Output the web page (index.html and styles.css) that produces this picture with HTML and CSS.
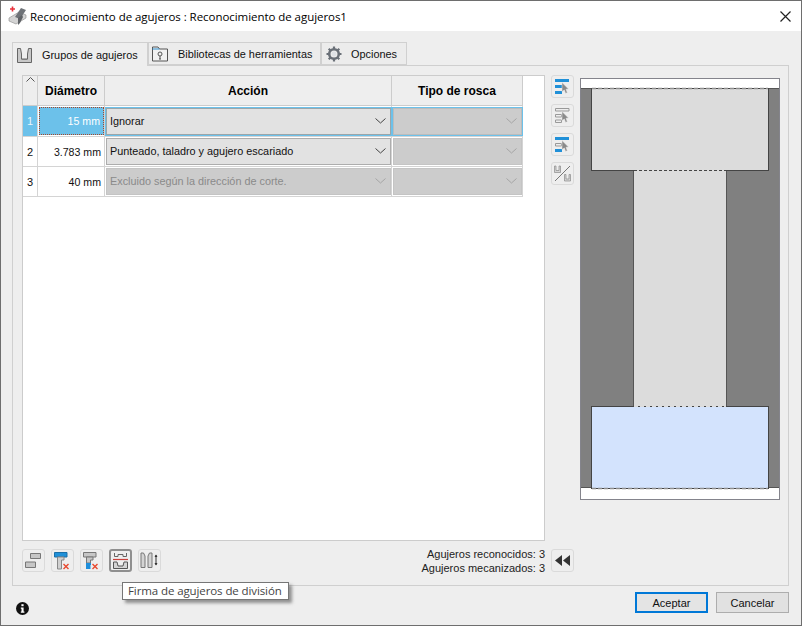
FILE: index.html
```html
<!DOCTYPE html>
<html lang="es">
<head>
<meta charset="utf-8">
<title>Reconocimiento de agujeros</title>
<link rel="stylesheet" href="styles.css">
</head>
<body>
<div class="window">
  <header class="titlebar">
    <svg class="title-icon" width="20" height="20" viewBox="0 0 20 20">
      <path d="M1 12 L11 6 L18 9 L18 12 L8 18 L1 15 Z" fill="#d4d4d4" stroke="#8a8a8a" stroke-width=".6"/>
      <path d="M7 11 L13 2 L18 4 L12 13 Z" fill="#6f7378"/>
      <path d="M10 12 L14 9 L15 11 L12 17 L10 19 Z" fill="#5f6266"/>
      <path d="M2 3 H7 M4.5 .5 V5.5" stroke="#e8303a" stroke-width="1.6"/>
    </svg>
    <span class="title-text">Reconocimiento de agujeros : Reconocimiento de agujeros1</span>
    <svg class="close-icon" width="11" height="11" viewBox="0 0 11 11"><path d="M.5 .5 L10.5 10.5 M10.5 .5 L.5 10.5" stroke="#222" stroke-width="1.2"/></svg>
  </header>

  <main class="content">
    <nav class="tabs">
      <div class="tab tab-active tab-1">
        <svg width="15" height="15" viewBox="0 0 15 15"><path d="M.5 .5 H3.5 L4.5 6 V11 H10.5 V6 L11.5 .5 H14.5 V14.5 H.5 Z" fill="#c8c8c8" stroke="#666"/><path d="M4.5 6 V11 H10.5 V6" fill="#eee" stroke="#666"/></svg>
        <span>Grupos de agujeros</span>
      </div>
      <div class="tab tab-2">
        <svg width="16" height="16" viewBox="0 0 16 16"><path d="M.5 15 V1 H6 L7.5 3 H15.5 V15 Z" fill="#f2f2f2" stroke="#555"/><path d="M.5 3 H7.5" stroke="#2b8ccc"/><circle cx="8" cy="8" r="2" fill="none" stroke="#555"/><path d="M8 10 V13 M7 13 H9" stroke="#555"/></svg>
        <span>Bibliotecas de herramientas</span>
      </div>
      <div class="tab tab-3">
        <svg width="16" height="16" viewBox="0 0 16 16"><circle cx="8" cy="8" r="4.8" fill="none" stroke="#6a7078" stroke-width="2.6"/><path d="M8 .5 V3 M8 13 V15.5 M.5 8 H3 M13 8 H15.5 M2.7 2.7 L4.5 4.5 M11.5 11.5 L13.3 13.3 M13.3 2.7 L11.5 4.5 M4.5 11.5 L2.7 13.3" stroke="#6a7078" stroke-width="2.2"/><circle cx="8" cy="8" r="2.4" fill="#dfe2e6"/></svg>
        <span>Opciones</span>
      </div>
    </nav>

    <section class="panel">
      <div class="panel-main">
        <div class="table-box">
          <table class="grid">
            <colgroup><col class="c0"><col class="c1"><col class="c2"><col class="c3"></colgroup>
            <thead>
              <tr>
                <th class="sort"><svg width="9" height="5" viewBox="0 0 9 5"><path d="M.5 4.5 L4.5 .5 L8.5 4.5" fill="none" stroke="#555"/></svg></th>
                <th>Diámetro</th><th>Acción</th><th>Tipo de rosca</th>
              </tr>
            </thead>
            <tbody>
              <tr class="row-selected">
                <td class="num">1</td>
                <td class="dia"><div class="dia-focus">15 mm</div></td>
                <td class="combo-cell"><div class="combo"><span>Ignorar</span><svg class="chev" width="11" height="6" viewBox="0 0 11 6"><path d="M.5 .5 L5.5 5 L10.5 .5" fill="none" stroke="#444"/></svg></div></td>
                <td class="combo-cell"><div class="combo combo-off"><span></span><svg class="chev" width="11" height="6" viewBox="0 0 11 6"><path d="M.5 .5 L5.5 5 L10.5 .5" fill="none" stroke="#a5a5a5"/></svg></div></td>
              </tr>
              <tr>
                <td class="num">2</td>
                <td class="dia">3.783 mm</td>
                <td class="combo-cell"><div class="combo"><span>Punteado, taladro y agujero escariado</span><svg class="chev" width="11" height="6" viewBox="0 0 11 6"><path d="M.5 .5 L5.5 5 L10.5 .5" fill="none" stroke="#444"/></svg></div></td>
                <td class="combo-cell"><div class="combo combo-off"><span></span><svg class="chev" width="11" height="6" viewBox="0 0 11 6"><path d="M.5 .5 L5.5 5 L10.5 .5" fill="none" stroke="#a5a5a5"/></svg></div></td>
              </tr>
              <tr>
                <td class="num">3</td>
                <td class="dia">40 mm</td>
                <td class="combo-cell"><div class="combo combo-off"><span>Excluido según la dirección de corte.</span><svg class="chev" width="11" height="6" viewBox="0 0 11 6"><path d="M.5 .5 L5.5 5 L10.5 .5" fill="none" stroke="#a5a5a5"/></svg></div></td>
                <td class="combo-cell"><div class="combo combo-off"><span></span><svg class="chev" width="11" height="6" viewBox="0 0 11 6"><path d="M.5 .5 L5.5 5 L10.5 .5" fill="none" stroke="#a5a5a5"/></svg></div></td>
              </tr>
            </tbody>
          </table>
        </div>

        <div class="side-tools">
          <button class="tool"><svg width="15" height="15" viewBox="0 0 15 15"><path d="M0 0 H14 V3 H0 Z M0 6 H7 V9 H0 Z M0 12 H7 V15 H0 Z" fill="#2090d8"/><path d="M7 3.5 L13.5 10 L11 10.3 L12.3 13.7 L10.5 14.3 L9.4 11 L7 12.6 Z" fill="#8a8a8a" stroke="#e8e8e8" stroke-width=".5"/></svg></button>
          <button class="tool"><svg width="15" height="15" viewBox="0 0 15 15"><path d="M.5 .5 H14 V3 H.5 Z M.5 6.5 H6.5 V9 H.5 Z M.5 12 H6.5 V14.5 H.5 Z" fill="#eee" stroke="#999"/><path d="M7 3.5 L13.5 10 L11 10.3 L12.3 13.7 L10.5 14.3 L9.4 11 L7 12.6 Z" fill="#8a8a8a" stroke="#e8e8e8" stroke-width=".5"/></svg></button>
          <button class="tool"><svg width="15" height="15" viewBox="0 0 15 15"><path d="M0 0 H14 V3 H0 Z M0 12 H7 V15 H0 Z" fill="#2090d8"/><path d="M.5 6.5 H6.5 V9 H.5 Z" fill="#eee" stroke="#999"/><path d="M7 3.5 L13.5 10 L11 10.3 L12.3 13.7 L10.5 14.3 L9.4 11 L7 12.6 Z" fill="#8a8a8a" stroke="#e8e8e8" stroke-width=".5"/></svg></button>
          <button class="tool"><svg width="19" height="17" viewBox="0 0 19 17"><path d="M1.5 1 V7.5 H7.5 V1 H6 V5.5 H3 V1 Z M11.5 9.5 V16 H17.5 V9.5 H16 V14 H13 V9.5 Z" fill="#d4d4d4" stroke="#8a8a8a" stroke-width=".7"/><path d="M2 16 L17 1" stroke="#777"/></svg></button>
        </div>

        <svg class="preview" width="200" height="422" viewBox="0 0 200 422">
          <rect x=".5" y=".5" width="199" height="421" fill="#808080" stroke="#84848c"/>
          <rect x="1" y="1" width="198" height="9" fill="#fff"/>
          <rect x="1" y="410" width="198" height="11" fill="#fff"/>
          <rect x="53.5" y="92.5" width="93" height="236" fill="#dcdcdc" stroke="#555"/>
          <rect x="11.5" y="10.5" width="177" height="82" fill="#dcdcdc" stroke="#444"/>
          <rect x="11.5" y="328.5" width="177" height="82" fill="#d3e3fd" stroke="#444"/>
          <path d="M1 10.5 H11 M189 10.5 H199 M1 409.5 H11 M189 409.5 H199" stroke="#555" fill="none"/>
          <path d="M12 10.5 H188 M12 410.5 H188" stroke="#8e8e8e" stroke-width="1.6" stroke-dasharray="4 2" fill="none"/>
          <path d="M54 92.5 H146" stroke="#dcdcdc" fill="none"/>
          <path d="M54 92.5 H146" stroke="#444" stroke-dasharray="3 2" fill="none"/>
          <path d="M54 328.5 H146" stroke="#dcdcdc" stroke-dasharray="4 2" fill="none"/>
        </svg>
      </div>

      <div class="panel-bottom">
        <div class="tool-row">
          <button class="tool"><svg width="17" height="15" viewBox="0 0 17 15"><path d="M5.5 .5 H15.5 V5.5 H5.5 Z M.5 9 H10.5 V14.5 H.5 Z" fill="#c6c6c6" stroke="#777"/></svg></button>
          <button class="tool"><svg width="17" height="18" viewBox="0 0 17 18"><path d="M.5 .5 H13 V5 H.5 Z" fill="#2090d8" stroke="#1a6fa8"/><path d="M3.5 5 H10 V8 H7.5 V17 H3.5 Z" fill="#d0d0d0" stroke="#888"/><path d="M9.5 12 L14.5 17 M14.5 12 L9.5 17" stroke="#e8492f" stroke-width="1.4"/></svg></button>
          <button class="tool"><svg width="17" height="18" viewBox="0 0 17 18"><path d="M.5 .5 H13 V5 H.5 Z" fill="#c6c6c6" stroke="#777"/><path d="M3.5 5 H10 V8 H7.5 V11 H3.5 Z" fill="#c6c6c6" stroke="#777"/><path d="M3 11 H8 V13 H7.5 V17 H3 Z" fill="#1f8fdc"/><path d="M9.5 12 L14.5 17 M14.5 12 L9.5 17" stroke="#e8492f" stroke-width="1.4"/></svg></button>
          <button class="tool tool-hover"><svg width="17" height="17" viewBox="0 0 17 17"><path d="M2.5 1 V4.5 H6 V2.5 H11 V4.5 H14.5 V1" fill="none" stroke="#666"/><path d="M1 7.5 H16" stroke="#c9413c" stroke-width="1.2"/><path d="M1.5 10 H5 L6 14 H11 L12 10 H15.5 V16.5 H1.5 Z" fill="#d4d4d4" stroke="#555"/></svg></button>
          <button class="tool"><svg width="19" height="17" viewBox="0 0 19 17"><path d="M1 1 H3.5 L5 4 V15.5 H1 Z M8 15.5 V4 L9.5 1 H12 V15.5 Z" fill="#d4d4d4" stroke="#777"/><path d="M16 3 V13" stroke="#333"/><path d="M14.5 5 L16 2.5 L17.5 5 Z M14.5 11 L16 13.5 L17.5 11 Z" fill="#333"/></svg></button>
        </div>
        <div class="stats">
          <div>Agujeros reconocidos: 3</div>
          <div>Agujeros mecanizados: 3</div>
        </div>
        <button class="tool tool-rewind"><svg width="15" height="11" viewBox="0 0 15 11"><path d="M7 0 V11 L0 5.5 Z M15 0 V11 L8 5.5 Z" fill="#333"/></svg></button>
      </div>
    </section>

    <footer class="footer">
      <svg class="info" width="13" height="13" viewBox="0 0 13 13"><circle cx="6.5" cy="6.5" r="6.5" fill="#111"/><rect x="5.4" y="2.2" width="2.2" height="2" fill="#fff"/><path d="M4.8 5.4 H7.6 V9.4 H8.4 V10.8 H4.8 V9.4 H5.5 V6.7 H4.8 Z" fill="#fff"/></svg>
      <button class="btn btn-primary">Aceptar</button>
      <button class="btn">Cancelar</button>
    </footer>
  </main>

  <div class="tooltip">Firma de agujeros de división</div>
</div>
</body>
</html>
```

FILE: styles.css
```css
* { box-sizing: border-box; }
html, body { margin: 0; padding: 0; }
body {
  width: 802px;
  height: 626px;
  overflow: hidden;
  font-family: "Liberation Sans", Arial, sans-serif;
  font-size: 12px;
  color: #111;
}
.window {
  position: relative;
  width: 802px;
  height: 626px;
  display: flex;
  flex-direction: column;
  border: 1px solid #6e6e6e;
  background: #eeeeee;
}
.titlebar {
  display: flex;
  align-items: center;
  height: 30px;
  flex: none;
  background: #fff;
  padding: 0 10px 0 7px;
}
.title-icon { flex: none; margin-right: 2px; margin-top: 0; }
.title-text {
  font-family: "Open Sans", sans-serif;
  font-size: 11.5px;
  letter-spacing: -0.05px;
  color: #000;
}
.close-icon { margin-left: auto; }

.content {
  flex: 1;
  display: flex;
  flex-direction: column;
  padding: 11px 12px 0 11px;
}
.tabs {
  display: flex;
  align-items: flex-end;
  height: 24px;
  position: relative;
  z-index: 1;
  margin-bottom: -1px;
}
.tab {
  display: flex;
  align-items: center;
  height: 23px;
  margin-bottom: 1px;
  border: 1px solid #d0d0d0;
  background: #ececec;
  font-size: 10.9px;
  color: #111;
  white-space: nowrap;
}
.tab-active {
  height: 24px;
  margin-bottom: 0;
  border-bottom: 0;
  background: #eeeeee;
  width: 136px;
  padding: 1px 0 0 4px;
}
.tab-active span { margin-left: 10px; }
.tab-2 { width: 173px; padding-left: 3px; }
.tab-2 span { margin-left: 10px; }
.tab-3 { width: 86px; padding-left: 4px; }
.tab-3 span { margin-left: 9px; }

.panel {
  height: 521px;
  flex: none;
  border: 1px solid #cfcfcf;
  padding: 9px 0 0 9px;
}
.panel-main { display: flex; align-items: flex-start; height: 466px; }
.table-box {
  width: 523px;
  height: 466px;
  flex: none;
  border: 1px solid #cccccc;
  background: #fff;
}
.grid {
  table-layout: fixed;
  width: 500px;
  border-collapse: separate;
  border-spacing: 0;
}
.c0 { width: 15px; }
.c1 { width: 67px; }
.c2 { width: 287px; }
.c3 { width: 131px; }
.grid th, .grid td {
  height: 30px;
  padding: 0;
  border-right: 1px solid #d4d4d4;
  border-bottom: 1px solid #d4d4d4;
}
.grid th {
  background: #eeeeee;
  border-color: #cccccc;
  font-size: 12px;
  font-weight: bold;
  color: #000;
  text-align: center;
}
.grid .sort { text-align: center; vertical-align: top; line-height: 6px; padding-top: 1px; }
.sort svg { display: block; margin: 0 auto; }
.grid .num { padding-left: 4px; font-size: 11px; }
.grid .dia { text-align: right; padding-right: 3px; font-size: 10.6px; }
.row-selected .num { background: #6cc1ea; color: #eaf6fc; }
.grid .row-selected .dia { padding: 1px 0 1px 1px; }
.dia-focus {
  height: 28px;
  line-height: 26px;
  background: #6cc1ea;
  border: 1px dotted #a5482a;
  color: #ffffff;
  text-align: right;
  padding-right: 3px;
}
.grid .combo-cell { padding: 1px 0 1px 1px; }
.combo {
  display: flex;
  align-items: center;
  justify-content: space-between;
  height: 27px;
  width: 100%;
  padding: 0 4px 1px 3px;
  background: #e2e2e2;
  border: 1px solid #adadad;
  font-size: 10.85px;
}
.combo-off { background: #cccccc; border-color: #c4c4c4; color: #8a8a8a; }
.row-selected .combo { box-shadow: 0 0 0 1px #6cc1ea; border-color: #9ca6aa; }
.row-selected .combo-off { border-color: #bcbcbc; }
.chev { flex: none; }

.tool {
  width: 23px;
  height: 23px;
  flex: none;
  display: flex;
  align-items: center;
  justify-content: center;
  padding: 0;
  background: #eeeeee;
  border: 1px solid #dadada;
  border-radius: 3px;
}
.side-tools {
  display: flex;
  flex-direction: column;
  gap: 6px;
  margin-left: 6px;
  flex: none;
}
.preview { flex: none; margin: 3px 0 0 6px; display: block; }

.panel-bottom {
  display: flex;
  align-items: flex-start;
  margin-top: 8px;
  width: 552px;
}
.tool-row { display: flex; gap: 6px; }
.tool-hover { border: 2px solid #8f8f8f; }
.stats {
  margin-left: auto;
  margin-top: -2px;
  text-align: right;
  line-height: 14px;
  font-size: 11px;
  color: #222;
}
.tool-rewind { margin-left: 6px; }

.footer {
  flex: 1;
  display: flex;
  align-items: flex-start;
  padding: 6px 0 0 4px;
}
.info { margin-top: 10px; }
.btn {
  width: 73px;
  height: 21px;
  padding: 0;
  margin-left: 8px;
  background: #e1e1e1;
  border: 1px solid #adadad;
  font-family: "Liberation Sans", Arial, sans-serif;
  font-size: 11px;
  color: #111;
}
.btn-primary { margin-left: auto; border: 2px solid #0078d7; background: #e4e4e4; }

.tooltip {
  position: absolute;
  left: 121px;
  top: 581px;
  width: 167px;
  height: 18px;
  line-height: 16px;
  background: #fff;
  border: 1px solid #767676;
  box-shadow: 3px 3px 3px rgba(70, 70, 70, .55);
  padding-left: 5px;
  font-family: "Open Sans", sans-serif;
  font-size: 11.5px;
  letter-spacing: -0.1px;
  color: #444;
  white-space: nowrap;
}
```
